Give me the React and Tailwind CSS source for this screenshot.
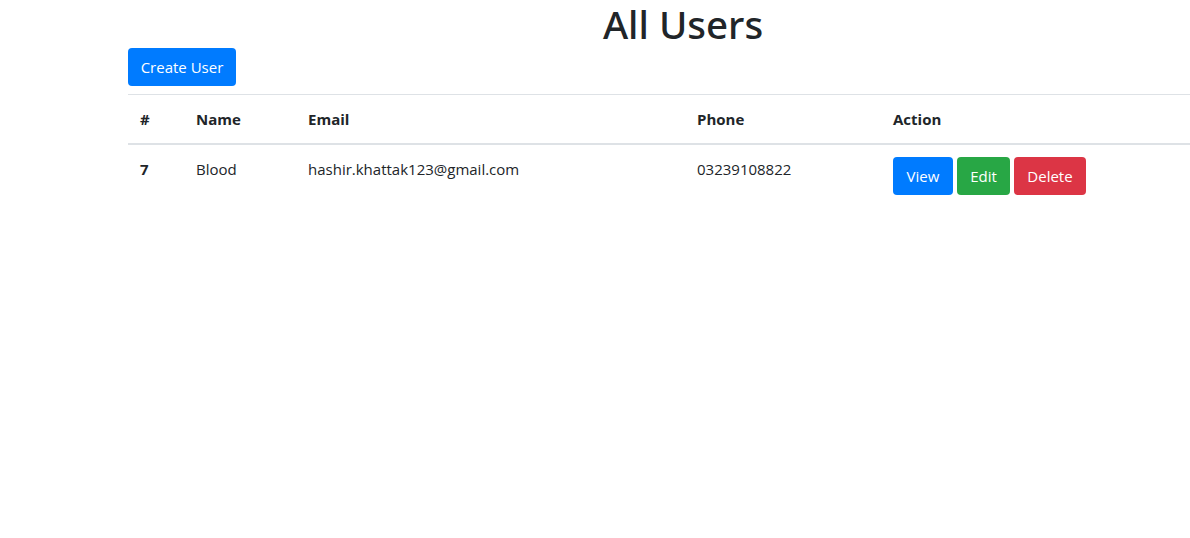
export default function App() {
  const th = "p-3 text-left font-bold border-t border-[#dee2e6] border-b-2 align-bottom";
  return (
    <div className="w-full min-h-[538px] overflow-hidden bg-white text-[#212529] text-[15px] leading-[24px] font-['Open_Sans','Noto_Sans',sans-serif]">
      <div className="ml-[128px] w-[1110px]">
        <h1 className="pt-px text-center text-[38.5px] font-medium leading-[47px] mb-0 font-['Noto_Sans','Open_Sans',sans-serif]">All Users</h1>
        <button className="block h-[38px] w-[108px] rounded-[4px] bg-[#007bff] text-white text-[15px] leading-[24px] whitespace-nowrap">Create User</button>
        <table className="mt-2 w-full table-fixed border-collapse">
          <colgroup>
            <col className="w-[56px]" />
            <col className="w-[112px]" />
            <col className="w-[389px]" />
            <col className="w-[196px]" />
            <col />
          </colgroup>
          <thead>
            <tr>
              <th className={th}>#</th>
              <th className={th}>Name</th>
              <th className={th}>Email</th>
              <th className={th}>Phone</th>
              <th className={th}>Action</th>
            </tr>
          </thead>
          <tbody>
            <tr>
              <th className="p-3 text-left font-bold align-top">7</th>
              <td className="p-3 align-top">Blood</td>
              <td className="p-3 align-top">hashir.khattak123@gmail.com</td>
              <td className="p-3 align-top">03239108822</td>
              <td className="p-3 align-top">
                <div className="flex gap-1">
                  <button className="h-[38px] w-[60px] rounded-[4px] bg-[#007bff] text-white leading-[24px]">View</button>
                  <button className="h-[38px] w-[53px] rounded-[4px] bg-[#28a745] text-white leading-[24px]">Edit</button>
                  <button className="h-[38px] w-[72px] rounded-[4px] bg-[#dc3545] text-white leading-[24px]">Delete</button>
                </div>
              </td>
            </tr>
          </tbody>
        </table>
      </div>
    </div>
  );
}
